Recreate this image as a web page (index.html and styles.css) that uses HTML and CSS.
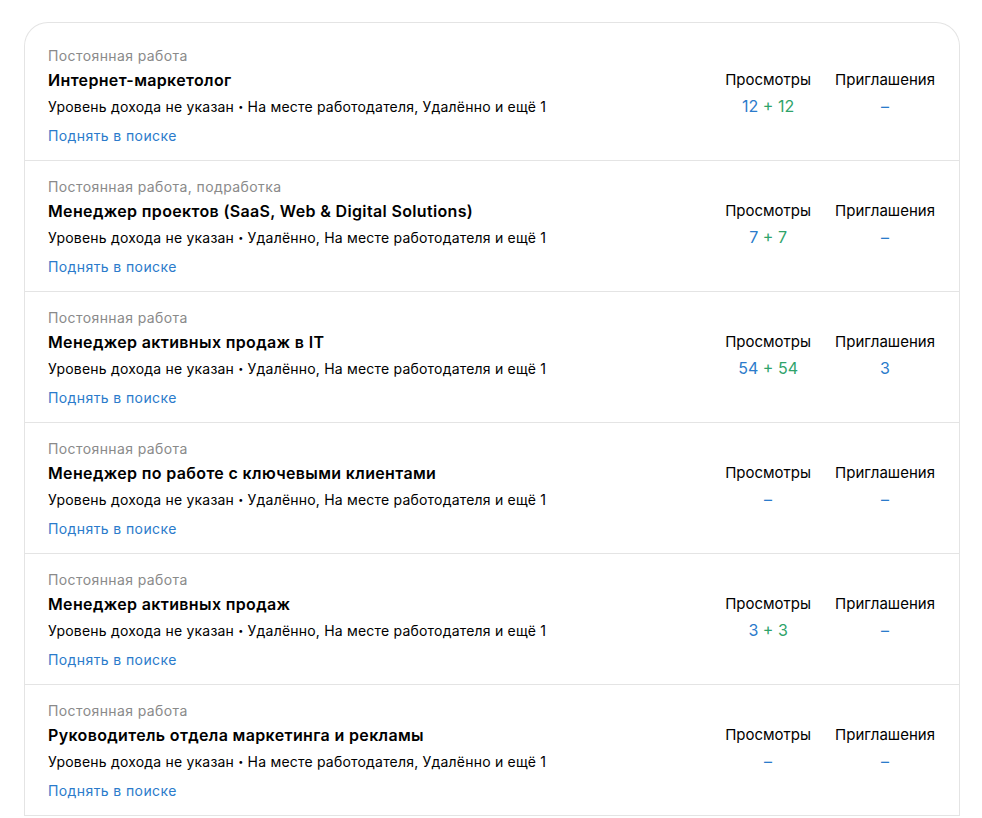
FILE: index.html
```html
<!DOCTYPE html>
<html>
<head>
    <title>Мои резюме</title>
    <link rel="stylesheet" href="styles.css">
</head>
<body>
    <div class="resume-list">
        <div class="resume-row">
            <div class="resume-info">
                <div class="resume-type">Постоянная работа</div>
                <div class="resume-title">Интернет-маркетолог</div>
                <div class="resume-meta">Уровень дохода не указан <span class="dot">•</span> На месте работодателя, Удалённо и ещё 1</div>
                <a class="resume-raise" href="#">Поднять в поиске</a>
            </div>
            <div class="resume-stats">
                <div class="stat stat-views">
                    <div class="stat-label">Просмотры</div>
                    <div class="stat-value"><span class="num-blue">12</span> <span class="num-green">+ 12</span></div>
                </div>
                <div class="stat stat-invites">
                    <div class="stat-label">Приглашения</div>
                    <div class="stat-value"><span class="num-blue">–</span></div>
                </div>
            </div>
        </div>

        <div class="resume-row">
            <div class="resume-info">
                <div class="resume-type">Постоянная работа, подработка</div>
                <div class="resume-title">Менеджер проектов (SaaS, Web &amp; Digital Solutions)</div>
                <div class="resume-meta">Уровень дохода не указан <span class="dot">•</span> Удалённо, На месте работодателя и ещё 1</div>
                <a class="resume-raise" href="#">Поднять в поиске</a>
            </div>
            <div class="resume-stats">
                <div class="stat stat-views">
                    <div class="stat-label">Просмотры</div>
                    <div class="stat-value"><span class="num-blue">7</span> <span class="num-green">+ 7</span></div>
                </div>
                <div class="stat stat-invites">
                    <div class="stat-label">Приглашения</div>
                    <div class="stat-value"><span class="num-blue">–</span></div>
                </div>
            </div>
        </div>

        <div class="resume-row">
            <div class="resume-info">
                <div class="resume-type">Постоянная работа</div>
                <div class="resume-title">Менеджер активных продаж в IT</div>
                <div class="resume-meta">Уровень дохода не указан <span class="dot">•</span> Удалённо, На месте работодателя и ещё 1</div>
                <a class="resume-raise" href="#">Поднять в поиске</a>
            </div>
            <div class="resume-stats">
                <div class="stat stat-views">
                    <div class="stat-label">Просмотры</div>
                    <div class="stat-value"><span class="num-blue">54</span> <span class="num-green">+ 54</span></div>
                </div>
                <div class="stat stat-invites">
                    <div class="stat-label">Приглашения</div>
                    <div class="stat-value"><span class="num-blue">3</span></div>
                </div>
            </div>
        </div>

        <div class="resume-row">
            <div class="resume-info">
                <div class="resume-type">Постоянная работа</div>
                <div class="resume-title">Менеджер по работе с ключевыми клиентами</div>
                <div class="resume-meta">Уровень дохода не указан <span class="dot">•</span> Удалённо, На месте работодателя и ещё 1</div>
                <a class="resume-raise" href="#">Поднять в поиске</a>
            </div>
            <div class="resume-stats">
                <div class="stat stat-views">
                    <div class="stat-label">Просмотры</div>
                    <div class="stat-value"><span class="num-blue">–</span></div>
                </div>
                <div class="stat stat-invites">
                    <div class="stat-label">Приглашения</div>
                    <div class="stat-value"><span class="num-blue">–</span></div>
                </div>
            </div>
        </div>

        <div class="resume-row">
            <div class="resume-info">
                <div class="resume-type">Постоянная работа</div>
                <div class="resume-title">Менеджер активных продаж</div>
                <div class="resume-meta">Уровень дохода не указан <span class="dot">•</span> Удалённо, На месте работодателя и ещё 1</div>
                <a class="resume-raise" href="#">Поднять в поиске</a>
            </div>
            <div class="resume-stats">
                <div class="stat stat-views">
                    <div class="stat-label">Просмотры</div>
                    <div class="stat-value"><span class="num-blue">3</span> <span class="num-green">+ 3</span></div>
                </div>
                <div class="stat stat-invites">
                    <div class="stat-label">Приглашения</div>
                    <div class="stat-value"><span class="num-blue">–</span></div>
                </div>
            </div>
        </div>

        <div class="resume-row">
            <div class="resume-info">
                <div class="resume-type">Постоянная работа</div>
                <div class="resume-title">Руководитель отдела маркетинга и рекламы</div>
                <div class="resume-meta">Уровень дохода не указан <span class="dot">•</span> На месте работодателя, Удалённо и ещё 1</div>
                <a class="resume-raise" href="#">Поднять в поиске</a>
            </div>
            <div class="resume-stats">
                <div class="stat stat-views">
                    <div class="stat-label">Просмотры</div>
                    <div class="stat-value"><span class="num-blue">–</span></div>
                </div>
                <div class="stat stat-invites">
                    <div class="stat-label">Приглашения</div>
                    <div class="stat-value"><span class="num-blue">–</span></div>
                </div>
            </div>
        </div>
    </div>
</body>
</html>
```

FILE: styles.css
```css
/* Page basics */
body {
    font-family: Inter, "Noto Sans", Arial, sans-serif;
    background-color: #fff;
    color: #000;
    margin: 0;
    padding: 22px 22px 0 24px;
}

/* Card that holds all resumes */
.resume-list {
    border: 1px solid #e4e4e4;
    border-bottom: none;
    border-radius: 24px 24px 0 0;
    padding-top: 7px;
}

/* One resume */
.resume-row {
    display: flex;
    justify-content: space-between;
    padding: 17px 24px 14px 23px;
    border-bottom: 1px solid #e4e4e4;
}

.resume-info {
    display: flex;
    flex-direction: column;
    align-items: flex-start;
}

.resume-type {
    font-size: 14px;
    line-height: 18px;
    letter-spacing: 0.4px;
    color: #8a8a8a;
}

.resume-title {
    font-size: 16px;
    font-weight: 600;
    line-height: 22px;
    letter-spacing: 0.35px;
    margin-top: 4px;
}

.resume-meta {
    font-size: 14px;
    line-height: 20px;
    letter-spacing: 0.2px;
    margin-top: 6px;
}

.dot {
    font-size: 9px;
    vertical-align: 2px;
}

.resume-raise {
    font-size: 14px;
    line-height: 20px;
    letter-spacing: 0.4px;
    margin-top: 9px;
    color: #2b7bcb;
    text-decoration: none;
}

/* Views / invites counters */
.resume-stats {
    display: flex;
    gap: 24px;
    padding-top: 23px;
}

.stat {
    text-align: center;
}

.stat-label {
    font-size: 15px;
    line-height: 20px;
}

.stat-value {
    font-size: 16px;
    line-height: 22px;
    margin-top: 5px;
}

.num-blue {
    color: #2b7bcb;
}

.num-green {
    color: #2fa36a;
}
```
